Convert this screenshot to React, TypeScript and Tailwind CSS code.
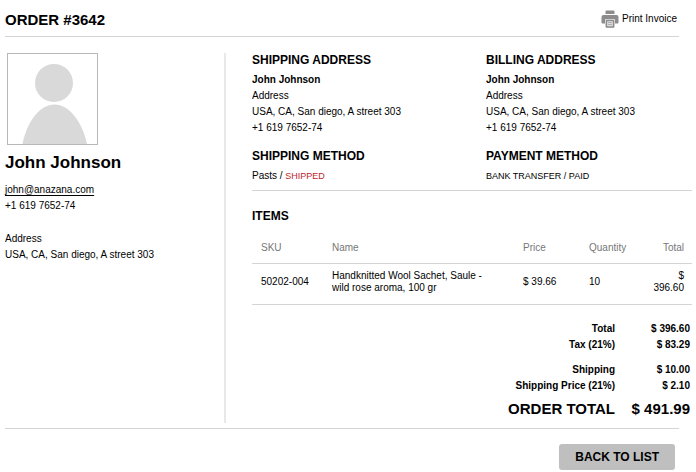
import React from 'react';

const items = [
  {
    sku: '50202-004',
    name: 'Handknitted Wool Sachet, Saule - wild rose aroma, 100 gr',
    price: '$ 39.66',
    quantity: 10,
    total: '$ 396.60',
  },
];

function PrinterIcon() {
  return (
    <svg width="18" height="18" viewBox="0 0 18 18" aria-hidden="true">
      <path d="M5.500 0.500h7a1 1 0 0 1 1 1V4h-9V1.500a1 1 0 0 1 1-1z" fill="#8c8c8c" />
      <path
        d="M2.500 5h13a2 2 0 0 1 2 2v5.500a1 1 0 0 1-1 1H1.500a1 1 0 0 1-1-1V7a2 2 0 0 1 2-2z"
        fill="#8c8c8c"
      />
      <rect x="4" y="9" width="10" height="9" rx="1" fill="#e4e4e4" />
      <rect x="5.500" y="10.500" width="7" height="6.500" rx="0.500" fill="#e8e8e8" stroke="#8c8c8c" strokeWidth="1.500" />
      <path d="M7 12.700h4M7 14.700h4" stroke="#a3a3a3" strokeWidth="1" />
    </svg>
  );
}

function Avatar() {
  return (
    <div className="ml-0.5 h-[92px] w-[91px] border border-[#b8b8b8]">
      <svg className="h-full w-full" viewBox="0 0 89 90" role="img" aria-label="John Johnson">
        <circle cx="46" cy="29" r="19" fill="#d9d9d9" />
        <path d="M14.500 90C19 67 32 50.500 46.500 50.500S74 67 79 90z" fill="#d9d9d9" />
      </svg>
    </div>
  );
}

function AddressBlock({title}: any) {
  return (
    <div>
      <h3 className="text-[12px] leading-[14px] font-bold">{title}</h3>
      <div className="mt-[5px] leading-4">
        <div className="font-bold">John Johnson</div>
        <div>Address</div>
        <div>USA, CA, San diego, A street 303</div>
        <div>+1 619 7652-74</div>
      </div>
    </div>
  );
}

function TotalRow({label, value, className = ''}: any) {
  return (
    <div className={`flex justify-end ${className}`}>
      <dt>{label}</dt>
      <dd className="w-[75px] text-right">{value}</dd>
    </div>
  );
}

export default function App() {
  return (
    <div className="bg-white pr-1 pb-0.5 pl-[5px] font-['Liberation_Sans',Arial,sans-serif] text-[10px] leading-4 text-black">
      <header className="mr-[13px] flex h-[37px] items-center justify-between border-b border-[#d4d4d4] pt-1">
        <h1 className="text-[15px] leading-5 font-bold">ORDER #3642</h1>
        <a href="#" className="flex items-center gap-[3px] pr-0.5 pb-0.5">
          <PrinterIcon />
          <span>Print Invoice</span>
        </a>
      </header>

      <main className="mt-4 flex">
        <aside className="w-[219px] shrink-0">
          <Avatar />
          <h2 className="mt-2 text-[17px] leading-5 font-bold">John Johnson</h2>
          <div className="mt-[9px]">
            <a href="#" className="underline underline-offset-2">
              john@anazana.com
            </a>
          </div>
          <div>+1 619 7652-74</div>
          <div className="mt-[17px]">Address</div>
          <div>USA, CA, San diego, A street 303</div>
        </aside>

        <div className="min-w-0 grow border-l-2 border-[#e8e8e8] pb-1 pl-[26px]">
          <div className="grid grid-cols-[234px_1fr] border-b border-[#d4d4d4] pb-1.5">
            <AddressBlock title="SHIPPING ADDRESS" />
            <AddressBlock title="BILLING ADDRESS" />
            <div className="mt-[13px]">
              <h3 className="text-[12px] leading-[14px] font-bold">SHIPPING METHOD</h3>
              <div className="mt-[5px]">
                Pasts / <span className="text-[9px] text-[#c1272d]">SHIPPED</span>
              </div>
            </div>
            <div className="mt-[13px]">
              <h3 className="text-[12px] leading-[14px] font-bold">PAYMENT METHOD</h3>
              <div className="mt-[5px] text-[9px]">BANK TRANSFER / PAID</div>
            </div>
          </div>

          <h3 className="mt-[18px] text-[12px] leading-[14px] font-bold">ITEMS</h3>
          <table className="mt-[9px] w-full table-fixed text-left leading-3">
            <thead className="text-[#777]">
              <tr className="h-[31px] border-b border-[#d4d4d4]">
                <th className="w-[71px] pt-0.5 pl-[9px] font-normal">SKU</th>
                <th className="pt-0.5 pr-6 pl-[9px] font-normal">Name</th>
                <th className="w-[66px] pt-0.5 pl-[9px] font-normal">Price</th>
                <th className="w-16 pt-0.5 pl-[9px] font-normal">Quantity</th>
                <th className="w-12 px-2 pt-0.5 text-right font-normal">Total</th>
              </tr>
            </thead>
            <tbody>
              {items.map((item) => (
                <tr key={item.sku} className="h-[41px] border-b border-[#d4d4d4]">
                  <td className="pb-1 pl-[9px]">{item.sku}</td>
                  <td className="pr-6 pb-1 pl-[9px]">{item.name}</td>
                  <td className="pb-1 pl-[9px]">{item.price}</td>
                  <td className="pb-1 pl-[9px]">{item.quantity}</td>
                  <td className="px-2 pb-1 text-right">{item.total}</td>
                </tr>
              ))}
            </tbody>
          </table>

          <dl className="mt-4 pr-0.5 font-bold">
            <TotalRow label="Total" value="$ 396.60" />
            <TotalRow label="Tax (21%)" value="$ 83.29" />
            <TotalRow label="Shipping" value="$ 10.00" className="mt-[9px]" />
            <TotalRow label="Shipping Price (21%)" value="$ 2.10" />
            <TotalRow
              label="ORDER TOTAL"
              value="$ 491.99"
              className="mt-[5px] text-[15px] leading-5"
            />
          </dl>
        </div>
      </main>

      <footer className="mt-[5px] mr-[13px] flex justify-end border-t border-[#d4d4d4] pt-[15px] pr-1">
        <button
          type="button"
          className="h-[26px] rounded-[3px] bg-[#bfbfbf] px-4 text-[12px] font-bold"
        >
          BACK TO LIST
        </button>
      </footer>
    </div>
  );
}
